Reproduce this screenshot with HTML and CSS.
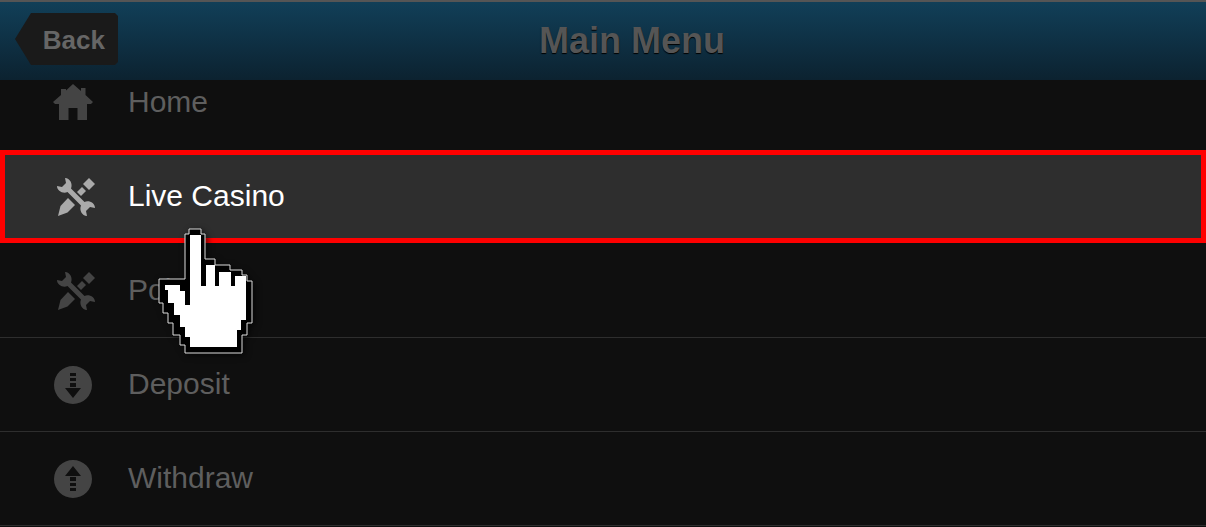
FILE: index.html
```html
<!DOCTYPE html>
<html lang="en">
<head>
  <meta charset="UTF-8" />
  <title>Main Menu</title>
  <link rel="stylesheet" href="styles.css">
</head>
<body>
  <svg class="icon-defs" aria-hidden="true">
    <symbol id="icon-home" viewBox="0 0 40 36">
      <path d="M20 0 L28 7 V4 H32.500 V11 L40 18 L38 20 H34 V36 H24.500 V24 H15.500 V36 H6 V20 H2 L0 18 L8 11 V5 H13 V6.500 Z" />
    </symbol>
    <symbol id="icon-tools" viewBox="0 0 38 38">
      <path d="M8 0 C13 0 16 6 14 10.500 L27.500 24 C32 22 38 25 38 30 L33 29 L29 33 L30 38 C25 38 22 32 24 27.500 L10.500 14 C6 16 0 13 0 8 L5 9 L9 5 Z" />
      <path d="M1 38 L3.500 28 L11 20 L18 27 L10.500 34.500 Z" />
      <path d="M20 14 L25 9 L29 13 L24 18 Z" />
      <path d="M32 0 L38 6 L32 12 L26 6 Z" />
    </symbol>
    <symbol id="icon-down" viewBox="0 0 38 38">
      <path fill-rule="evenodd" d="M19 0 A19 19 0 1 1 19 38 A19 19 0 1 1 19 0 Z M16 7 V10 H22 V7 Z M16 12 V15 H22 V12 Z M16 17 V21 H22 V17 Z M11 22 L19 32 L27 22 Z" />
    </symbol>
  </svg>

  <header class="top-bar">
    <a class="back-btn">Back</a>
    <h1 class="top-title">Main Menu</h1>
  </header>

  <nav class="menu">
    <a class="menu-row row-home">
      <svg class="menu-icon icon-home"><use href="#icon-home" /></svg>
      <span>Home</span>
    </a>
    <a class="menu-row row-active">
      <svg class="menu-icon icon-tools"><use href="#icon-tools" /></svg>
      <span>Live Casino</span>
    </a>
    <a class="menu-row">
      <svg class="menu-icon icon-tools"><use href="#icon-tools" /></svg>
      <span>Poker</span>
    </a>
    <a class="menu-row">
      <svg class="menu-icon"><use href="#icon-down" /></svg>
      <span>Deposit</span>
    </a>
    <a class="menu-row">
      <svg class="menu-icon icon-flip"><use href="#icon-down" /></svg>
      <span>Withdraw</span>
    </a>
  </nav>

  <svg class="hand-cursor" viewBox="0 0 140 145" aria-hidden="true">
    <path class="hand-outer" d="M55 14 H59 V9 H71 V14 H75 V39 H85 V45 H100 V50 H112 V55 H117 V61 H122 V103 H117 V115 H112 V133 H55 V125 H50 V115 H43 V103 H38 V93 H33 V83 H29 V59 H55 Z" />
    <path class="hand-inner" d="M60 15 H71 V66 H76 V45 H85 V66 H89 V52 H101 V66 H105 V56 H116 V100 H111 V110 H107 V127 H60 V117 H55 V107 H50 V95 H44 V83 H38 V70 H35 V65 H50 V71 H55 V85 H60 Z" />
  </svg>
</body>
</html>
```

FILE: styles.css
```css
html, body {
  margin: 0; padding: 0;
  background: #0f0f0f;
  font-family: "Liberation Sans", Arial, sans-serif;
  height: 527px;
  overflow: hidden;
}
body {
  position: relative;
}
.icon-defs {
  display: none;
}
.top-bar {
  display: flex;
  align-items: center;
  box-sizing: border-box;
  height: 80px;
  padding: 0 60px 4px 15px;
  border-top: 2px solid #555;
  background: linear-gradient(#113f58, #0c2230);
}
.back-btn {
  display: flex;
  align-items: center;
  justify-content: flex-end;
  box-sizing: border-box;
  width: 103px;
  height: 52px;
  padding: 2px 13px 0 0;
  background: #1a1a1a;
  clip-path: polygon(16px 0, calc(100% - 3px) 0, 100% 3px, 100% calc(100% - 3px), calc(100% - 3px) 100%, 16px 100%, 0 50%);
  font-size: 26px;
  font-weight: bold;
  color: #666;
}
.top-title {
  flex: 1;
  margin: 4px 0 0;
  text-align: center;
  font-size: 36px;
  font-weight: bold;
  color: #555;
  text-shadow: 0 1px 1px #000;
}
.menu {
  height: 447px;
  overflow: hidden;
}
.menu-row {
  display: flex;
  align-items: center;
  box-sizing: border-box;
  height: 94px;
  padding: 0 0 2px 53px;
  border-bottom: 1px solid #2e2e2e;
  font-size: 30px;
  color: #5e5e5e;
}
.row-home {
  margin-top: -24px;
  border-bottom-color: #0f0f0f;
}
.row-active {
  border-bottom-color: #0f0f0f;
  background: #2e2e2e;
  box-shadow: inset 0 0 0 5px #f00;
  color: #fff;
}
.menu-icon {
  flex: none;
  width: 38px;
  height: 38px;
  margin: 2px 36px 0 1px;
  fill: #444;
}
.icon-home {
  width: 40px;
  height: 36px;
  margin: 0 36px 0 0;
}
.icon-tools {
  margin: 2px 34px 0 4px;
}
.icon-tools + span {
  margin-left: -1px;
}
.icon-home + span {
  margin-left: -1px;
}
.icon-flip {
  transform: scaleY(-1);
}
.row-active .menu-icon {
  fill: #aaa;
}
.hand-cursor {
  position: absolute;
  left: 130px;
  top: 220px;
  width: 140px;
  height: 145px;
  filter: drop-shadow(2px 2px 3px rgba(0, 0, 0, .7));
}
.hand-outer {
  fill: #000;
  stroke: #ddd;
  stroke-width: 1;
}
.hand-inner {
  fill: #fff;
}
```
